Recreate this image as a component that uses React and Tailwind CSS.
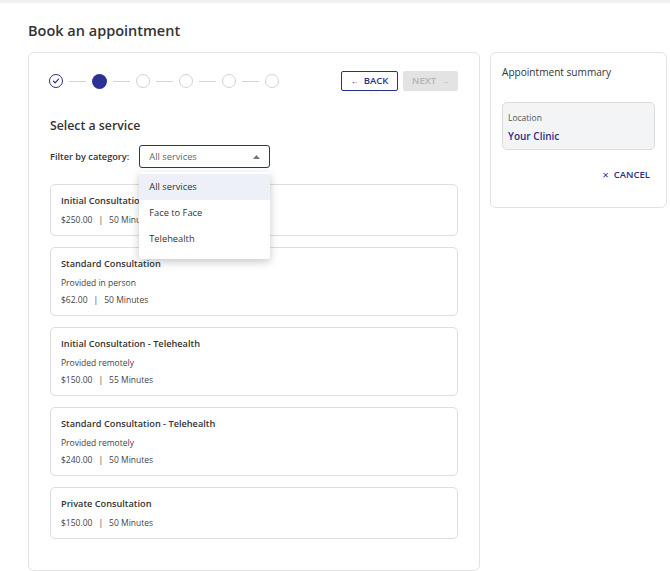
import { useState } from "react";

const navy = "text-[#2b2f86]";

const services = [
  { name: "Initial Consultation", price: "$250.00", mins: "50 Minutes" },
  { name: "Standard Consultation", note: "Provided in person", price: "$62.00", mins: "50 Minutes" },
  { name: "Initial Consultation - Telehealth", note: "Provided remotely", price: "$150.00", mins: "55 Minutes" },
  { name: "Standard Consultation - Telehealth", note: "Provided remotely", price: "$240.00", mins: "50 Minutes" },
  { name: "Private Consultation", price: "$150.00", mins: "50 Minutes" },
];

function Stepper() {
  const steps = [0, 1, 2, 3, 4, 5];
  return (
    <div className="flex items-center">
      {steps.map((s) => (
        <div key={s} className="flex items-center">
          {s > 0 && <div className="w-[17px] h-px bg-[#d4d4d4] mx-[6px]" />}
          {s === 0 ? (
            <div className="w-[14px] h-[14px] rounded-full border-[1.5px] border-[#2b2f86] flex items-center justify-center">
              <svg width="8" height="8" viewBox="0 0 8 8" fill="none">
                <path d="M1.5 4.2 L3.2 5.8 L6.5 2.2" stroke="#2b2f86" strokeWidth="1.2" strokeLinecap="round" strokeLinejoin="round" />
              </svg>
            </div>
          ) : s === 1 ? (
            <div className="w-[15px] h-[15px] rounded-full bg-[#2a3192]" />
          ) : (
            <div className="w-[14px] h-[14px] rounded-full border-[1.5px] border-[#d2d2d2]" />
          )}
        </div>
      ))}
    </div>
  );
}

function ServiceCard({ s }) {
  return (
    <div className="border border-[#dedede] rounded-[5px] px-[10px] pt-[9px] pb-[8px]">
      <div className="text-[9.2px] leading-[14px] font-semibold text-[#333]">{s.name}</div>
      <div className="mt-[5px] flex flex-col gap-[3px] text-[8.5px] leading-[14px] text-[#444]">
        {s.note && <div>{s.note}</div>}
        <div>
          {s.price}
          <span className="mx-[6px]">|</span>
          {s.mins}
        </div>
      </div>
    </div>
  );
}

export default function App() {
  const [open] = useState(true);
  return (
    <div className="min-h-[571px] bg-white font-['Open_Sans',sans-serif] text-[#333]">
      <div className="h-[3px] bg-[#f1f1f1]" />
      <div className="pl-[28px] pr-[3px]">
        <h1 className="pt-[18px] text-[14.5px] leading-[20px] font-semibold text-[#333]">Book an appointment</h1>

        <div className="mt-[11px] flex gap-[10px] items-start">
          {/* Main panel */}
          <div className="w-[452px] border border-[#e2e2e2] rounded-[6px] pt-[18px] px-[21px] pb-[31px]">
            <div className="flex items-center justify-between h-[20px]">
              <div className="-ml-[1px]">
                <Stepper />
              </div>
              <div className="flex gap-[5px]">
                <button className={`w-[57px] h-[20px] border border-[#2b2f86] rounded-[2px] flex items-center justify-center gap-[5px] text-[9.5px] font-semibold ${navy}`}>
                  <span className="text-[8px]">←</span> BACK
                </button>
                <button className="w-[55px] h-[20px] bg-[#e3e3e3] rounded-[2px] flex items-center justify-center gap-[5px] text-[9.5px] font-semibold text-[#b3b3b3]">
                  NEXT <span className="text-[8px]">→</span>
                </button>
              </div>
            </div>

            <h2 className="mt-[26px] text-[12.3px] leading-[18px] font-semibold text-[#333]">Select a service</h2>

            <div className="mt-[10px] flex items-center gap-[10px] relative">
              <span className="text-[9.2px] font-semibold text-[#333]">Filter by category:</span>
              <div className="relative">
                <div className="w-[131px] h-[23px] border border-[#2b2f86] rounded-[3px] flex items-center justify-between pl-[9px] pr-[9px]">
                  <span className="text-[9.3px] text-[#666]">All services</span>
                  <svg width="7" height="4" viewBox="0 0 7 4">
                    <path d="M0 4 L3.5 0 L7 4 Z" fill="#777" />
                  </svg>
                </div>
                {open && (
                  <div className="absolute left-0 top-[27px] w-[131px] bg-white rounded-[3px] shadow-[0_3px_8px_rgba(0,0,0,0.22)] pt-[2px] pb-[7px] z-10">
                    <div className="h-[26px] flex items-center pl-[10px] text-[9.3px] text-[#333] bg-[#eef0f8]">All services</div>
                    <div className="h-[26px] flex items-center pl-[10px] text-[9.3px] text-[#333]">Face to Face</div>
                    <div className="h-[26px] flex items-center pl-[10px] text-[9.3px] text-[#333]">Telehealth</div>
                  </div>
                )}
              </div>
            </div>

            <div className="mt-[16px] flex flex-col gap-[11px]">
              {services.map((s) => (
                <ServiceCard key={s.name} s={s} />
              ))}
            </div>
          </div>

          {/* Summary panel */}
          <div className="w-[177px] border border-[#e2e2e2] rounded-[6px] pt-[12px] px-[11px] pb-[23px]">
            <div className="text-[10.1px] leading-[14px] font-medium text-[#333]">Appointment summary</div>
            <div className="mt-[23px] bg-[#f3f4f6] border border-[#dcdcdc] rounded-[5px] px-[5px] pt-[9px] pb-[6px]">
              <div className="text-[8.5px] leading-[12px] text-[#555]">Location</div>
              <div className={`mt-[5px] text-[10px] leading-[14px] font-semibold ${navy}`}>Your Clinic</div>
            </div>
            <div className="mt-[17px] flex justify-end pr-[5px]">
              <button className={`flex items-center gap-[5px] text-[9.5px] font-semibold ${navy}`}>
                <span className="text-[11px] font-normal">×</span> CANCEL
              </button>
            </div>
          </div>
        </div>
      </div>
    </div>
  );
}
